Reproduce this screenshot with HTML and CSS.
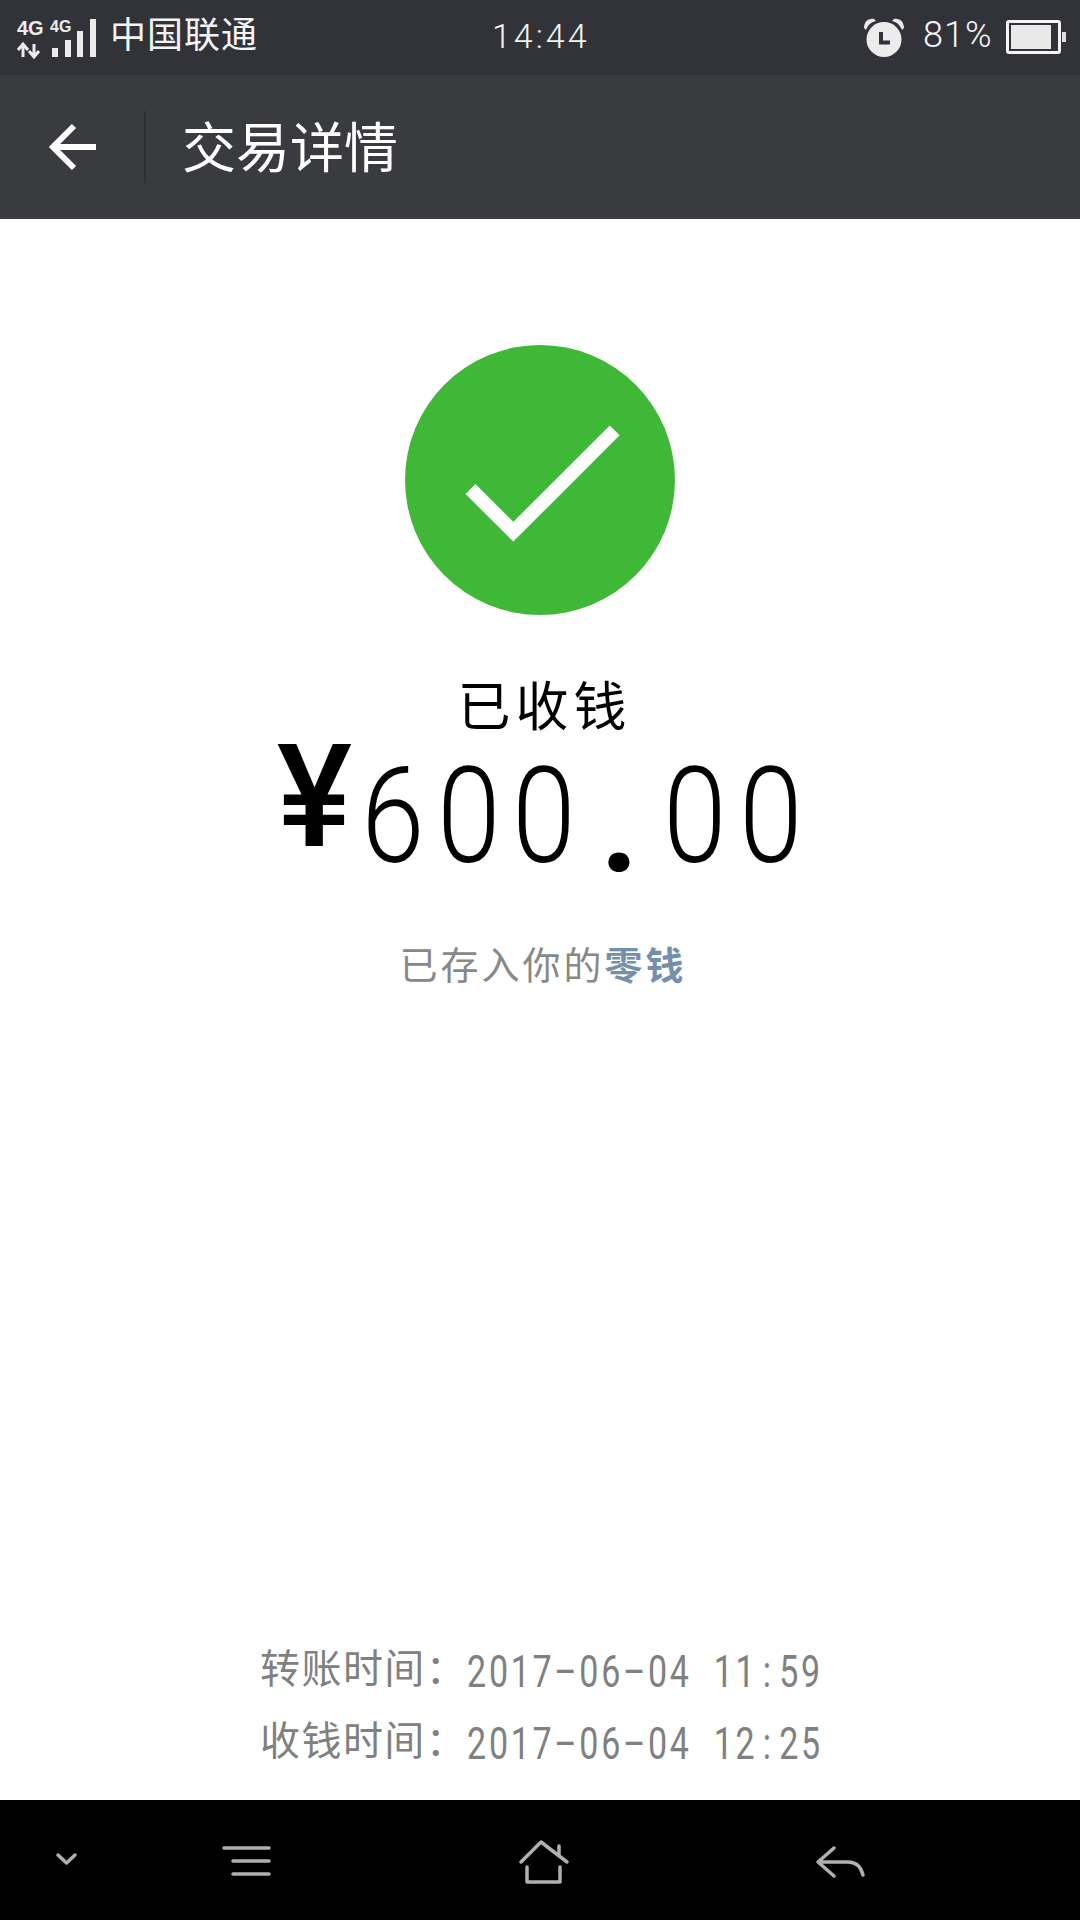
FILE: index.html
```html
<!DOCTYPE html>
<html>
<head>
  <meta charset="utf-8">
  <link rel="stylesheet" href="styles.css">
</head>
<body>
  <div class="screen">

    <div class="status-bar">
      <svg class="signal" width="82" height="40" viewBox="0 0 82 40">
        <text x="0" y="16" class="sig-main">4G</text>
        <text x="33" y="13" class="sig-small">4G</text>
        <path d="M6 38V25M1 31l5-6 5 6M17 25v13M12 32l5 6 5-6" class="sig-arrow"/>
        <rect x="35" y="29" width="6" height="9"/>
        <rect x="48" y="21" width="6" height="17"/>
        <rect x="60" y="12" width="6" height="26"/>
        <rect x="73" y="0" width="6" height="38"/>
      </svg>
      <span class="carrier">中国联通</span>
      <span class="clock">14:44</span>
      <svg class="alarm" width="42" height="40" viewBox="0 0 42 40">
        <circle cx="21" cy="21.5" r="17.5" fill="#ececec"/>
        <path d="M1 10C1 4 5 0 11 1L13 3C8 4 5 7 3 12Z" fill="#ececec"/>
        <path d="M41 10C41 4 37 0 31 1L29 3C34 4 37 7 39 12Z" fill="#ececec"/>
        <path d="M18 14v10.500h9" fill="none" stroke="#323338" stroke-width="4"/>
      </svg>
      <span class="battery-pct">81%</span>
      <div class="battery">
        <div class="battery-body"><div class="battery-fill"></div></div>
        <div class="battery-nub"></div>
      </div>
    </div>

    <div class="toolbar">
      <svg class="back-arrow" width="50" height="50" viewBox="0 0 50 50">
        <path d="M48 25H5M26 4L5 25L26 46" fill="none" stroke="#fff" stroke-width="6"/>
      </svg>
      <div class="toolbar-divider"></div>
      <span class="toolbar-title">交易详情</span>
    </div>

    <div class="content">
      <svg class="ok-icon" width="270" height="270" viewBox="0 0 270 270">
        <circle cx="135" cy="135" r="135" fill="#3fb838"/>
        <path d="M65.500 144L108.300 186.700L209.700 85.400" fill="none" stroke="#fff" stroke-width="14"/>
      </svg>
      <div class="status-text">已收钱</div>
      <div class="amount">
        <span class="yen">¥</span>
        <span class="digit">6</span>
        <span class="digit">0</span>
        <span class="digit">0</span>
        <span class="digit dot">.</span>
        <span class="digit">0</span>
        <span class="digit">0</span>
      </div>
      <div class="note">已存入你的<span class="note-link">零钱</span></div>

      <div class="times">
        <div class="time-row">转账时间：<span class="time-val">2017–06–04 11<span class="colon">:</span>59</span></div>
        <div class="time-row">收钱时间：<span class="time-val">2017–06–04 12<span class="colon">:</span>25</span></div>
      </div>
    </div>

    <div class="nav-bar">
      <svg width="1080" height="120" viewBox="0 0 1080 120" fill="none" stroke="#b0b0b0" stroke-width="3.500" stroke-linecap="round" stroke-linejoin="round">
        <path d="M58 55L66.500 63L75 55"/>
        <path d="M224 48H269M233 61H269M233 74H269"/>
        <path d="M521 62L541 42L567 62M559 46V55M527 67V82H560V67"/>
        <path d="M834 48L818 62L834 76M818 62H848C856 62 861 67 863 75"/>
      </svg>
    </div>

  </div>
</body>
</html>
```

FILE: styles.css
```css
* { box-sizing: border-box; }
html, body { margin: 0; padding: 0; }
body { font-family: "Noto Sans CJK SC", "Liberation Sans", sans-serif; background: #fff; }

.screen { width: 1080px; height: 1920px; display: flex; flex-direction: column; overflow: hidden; }

/* status bar */
.status-bar { height: 75px; flex: none; background: #323338; color: #f4f4f4; display: flex; align-items: center; padding-left: 17px; font-weight: 300; }
.signal { fill: #ececec; margin-top: 3px; overflow: visible; }
.sig-main { font: bold 20px "Liberation Sans", sans-serif; }
.sig-small { font: bold 16px "Liberation Sans", sans-serif; }
.sig-arrow { fill: none; stroke: #ececec; stroke-width: 3; }
.carrier { font-size: 36px; font-weight: 400; letter-spacing: 1px; margin-left: 11px; margin-bottom: 12px; width: 383px; }
.clock { font-family: Roboto, sans-serif; font-size: 34px; letter-spacing: 3px; width: 372px; margin-left: -1px; margin-bottom: 4px; }
.alarm { margin-left: -1px; }
.battery-pct { font-family: Roboto, sans-serif; font-size: 36px; letter-spacing: 1px; margin-left: 18px; width: 83px; margin-bottom: 6px; }
.battery { display: flex; align-items: center; margin-bottom: 2px; }
.battery-body { width: 55px; height: 34px; border: 3px solid #f4f4f4; border-radius: 3px; padding: 2px; }
.battery-fill { width: 40px; height: 100%; background: #e9e9e9; }
.battery-nub { width: 4px; height: 10px; background: #e0e0e0; margin-left: 1px; }

/* toolbar */
.toolbar { height: 144px; flex: none; background: #3a3b3f; display: flex; align-items: center; padding-left: 48px; }
.toolbar-divider { width: 2px; height: 72px; background: #2f3034; margin-left: 46px; }
.toolbar-title { color: #fff; font-size: 54px; font-weight: 400; margin-left: 36px; margin-bottom: 6px; }

/* main */
.content { flex: 1; display: flex; flex-direction: column; align-items: center; padding-top: 126px; }
.ok-icon { flex: none; }
.status-text { font-size: 53px; line-height: 60px; letter-spacing: 5px; color: #000; margin-top: 58px; margin-left: 9px; font-weight: 400; }
.amount { display: flex; align-items: flex-start; height: 130px; color: #000; margin-top: -2px; margin-left: 5px; }
.yen { font: 500 142px/130px Roboto, sans-serif; margin-top: 2px; margin-right: 3px; }
.digit { font: 340 134px/130px Roboto, sans-serif; width: 75.500px; margin-top: 21px; text-align: center; transform: scaleX(.85); }
.dot { font-weight: 700; transform: translateY(9px); }
.note { font-size: 38px; line-height: 50px; letter-spacing: 3px; color: #888; margin-top: 77px; margin-left: 6px; font-weight: 400; }
.note-link { color: #7490ad; font-weight: 700; }
.times { margin-top: auto; margin-bottom: 26px; margin-left: 3px; }
.time-row { font-size: 40px; line-height: 72px; height: 72px; color: #808080; font-weight: 400; letter-spacing: 1.400px; white-space: nowrap; }
.time-val { display: inline-block; font-family: Roboto, sans-serif; font-size: 34px; line-height: 40px; letter-spacing: 2.700px; word-spacing: 11px; transform: scaleY(1.3); }
.colon { margin: 0 5.500px; }

/* bottom nav */
.nav-bar { height: 120px; flex: none; background: #000; }
.nav-bar svg { display: block; }
```
